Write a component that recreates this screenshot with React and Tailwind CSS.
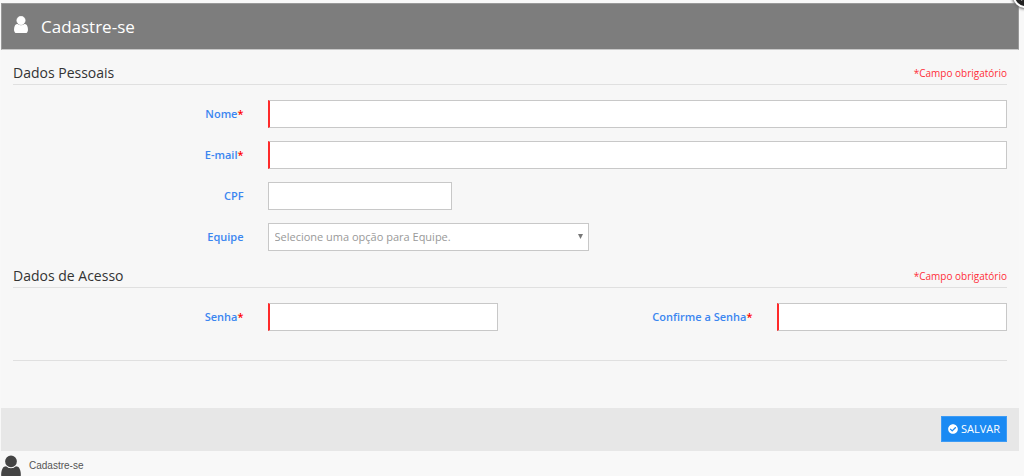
import { useState } from "react";
import { FaCheckCircle } from "react-icons/fa";

const HEAD = "M1024 512q0 159-112.5 271.5T640 896 368.500 783.500 256 512t112.500-271.500T640 128t271.500 112.500T1024 512z";
const BODY =
  "M1280 1399q0 109-62.500 187t-150.500 78H213q-88 0-150.500-78T0 1399q0-85 8.500-160.500t31.500-152 58.500-131 94-89T327 832q131 128 313 128t313-128q76 0 134.500 34.500t94 89 58.500 131 31.500 152 8.500 160.500z";

/* ── User silhouette ── */
function UserIcon({ className, outline = "stroke-current", outlineWidth = 60 }) {
  return (
    <svg className={className} viewBox="0 100 1280 1564" fill="currentColor" aria-hidden="true">
      <path d={BODY} />
      <path d={HEAD} className={outline} strokeWidth={outlineWidth} paintOrder="stroke" />
    </svg>
  );
}

/* ── Section title with the required note on the right ── */
function SectionTitle({ title }) {
  return (
    <div className="flex items-end justify-between border-b border-[#e0e0e0]">
      <h2 className="text-sm leading-[22px] text-[#333]">{title}</h2>
      <span className="text-[10px] leading-[22px] text-[#ff2d37]">*Campo obrigatório</span>
    </div>
  );
}

function Label({ htmlFor, required, children }) {
  return (
    <label
      htmlFor={htmlFor}
      className="col-span-3 px-3 text-right text-[11px] leading-7 font-semibold text-[#3b86f0]"
    >
      {children}
      {required && <span className="text-[#ff0000]">*</span>}
    </label>
  );
}

function TextField({ id, type = "text", required, className = "w-full" }) {
  return (
    <input
      id={id}
      name={id}
      type={type}
      required={required}
      className={`block h-7 border border-[#c8c8c8] bg-white px-2 text-[11px] text-[#555] outline-none focus:border-[#3b86f0] ${
        required ? "border-l-2 border-l-[#ff2a2a]" : ""
      } ${className}`}
    />
  );
}

function Row({ children }) {
  return <div className="-mx-3 grid grid-cols-12 items-center">{children}</div>;
}

export default function App() {
  const [team, setTeam] = useState("");

  return (
    <div className="relative min-h-screen overflow-hidden bg-[#f8f8f8] pt-[3px] font-['Open_Sans',sans-serif]">
      <button
        type="button"
        aria-label="Fechar"
        className="absolute -top-4 -right-[13px] flex size-6 items-center justify-center rounded-full border-2 border-white bg-[#222] text-white shadow-[0_0_3px_1px_#666]"
      >
        <svg className="size-3" viewBox="0 0 12 12" stroke="currentColor" strokeWidth="2" aria-hidden="true">
          <path d="M2 2l8 8M10 2l-8 8" />
        </svg>
      </button>

      <form className="mr-[5px] ml-px bg-[#f7f7f7]" onSubmit={(e) => e.preventDefault()}>
        <header className="flex h-[47px] items-center border border-[#999] border-b-[#c8c8c8] bg-[#7d7d7d] px-3 text-white">
          <UserIcon className="mb-1 h-[17px] w-[14px]" />
          <h1 className="ml-[13px] text-[17px]">Cadastre-se</h1>
        </header>

        <div className="px-3 pt-3">
          <SectionTitle title="Dados Pessoais" />
          <div className="flex flex-col gap-[13px] pt-[15px] pb-3.5">
            <Row>
              <Label htmlFor="nome" required>Nome</Label>
              <div className="col-span-9 px-3">
                <TextField id="nome" required />
              </div>
            </Row>
            <Row>
              <Label htmlFor="email" required>E-mail</Label>
              <div className="col-span-9 px-3">
                <TextField id="email" type="email" required />
              </div>
            </Row>
            <Row>
              <Label htmlFor="cpf">CPF</Label>
              <div className="col-span-9 px-3">
                <TextField id="cpf" className="w-1/4" />
              </div>
            </Row>
            <Row>
              <Label htmlFor="equipe">Equipe</Label>
              <div className="col-span-9 px-3">
                <div className="relative w-[321px] max-w-full">
                  <select
                    id="equipe"
                    value={team}
                    onChange={(e) => setTeam(e.target.value)}
                    className="block h-7 w-full appearance-none border border-[#c8c8c8] bg-white pr-5 pl-1.5 text-[11px] text-[#999] outline-none"
                  >
                    <option value="">Selecione uma opção para Equipe.</option>
                  </select>
                  <svg
                    className="pointer-events-none absolute top-[11px] right-1.5 h-[5px] w-[5px] fill-[#777]"
                    viewBox="0 0 5 5"
                    aria-hidden="true"
                  >
                    <path d="M0 0h5L2.500 5z" />
                  </svg>
                </div>
              </div>
            </Row>
          </div>

          <SectionTitle title="Dados de Acesso" />
          <div className="border-b border-[#e0e0e0] pt-[15px] pb-[29px]">
            <Row>
              <Label htmlFor="senha" required>Senha</Label>
              <div className="col-span-3 px-3">
                <TextField id="senha" type="password" required />
              </div>
              <Label htmlFor="confirma" required>Confirme a Senha</Label>
              <div className="col-span-3 px-3">
                <TextField id="confirma" type="password" required />
              </div>
            </Row>
          </div>
        </div>

        <footer className="mt-[47px] flex justify-end bg-[#e7e7e7] px-3 pt-2 pb-[9px]">
          <button
            type="submit"
            className="flex h-[26px] items-center gap-[3px] border border-[#3d9bf5] bg-[#1a8af3] px-1.5 text-[11px] text-white"
          >
            <FaCheckCircle className="size-2.5" aria-hidden="true" />
            SALVAR
          </button>
        </footer>
      </form>

      <div className="flex h-[25px] items-start gap-2 overflow-hidden pt-1 pl-px">
        <UserIcon className="h-6 w-5 shrink-0 text-[#444]" outline="stroke-[#f8f8f8]" outlineWidth={110} />
        <span className="pt-[3px] font-['Liberation_Sans',Arial,sans-serif] text-[10px] leading-4 text-[#555]">
          Cadastre-se
        </span>
      </div>
    </div>
  );
}
